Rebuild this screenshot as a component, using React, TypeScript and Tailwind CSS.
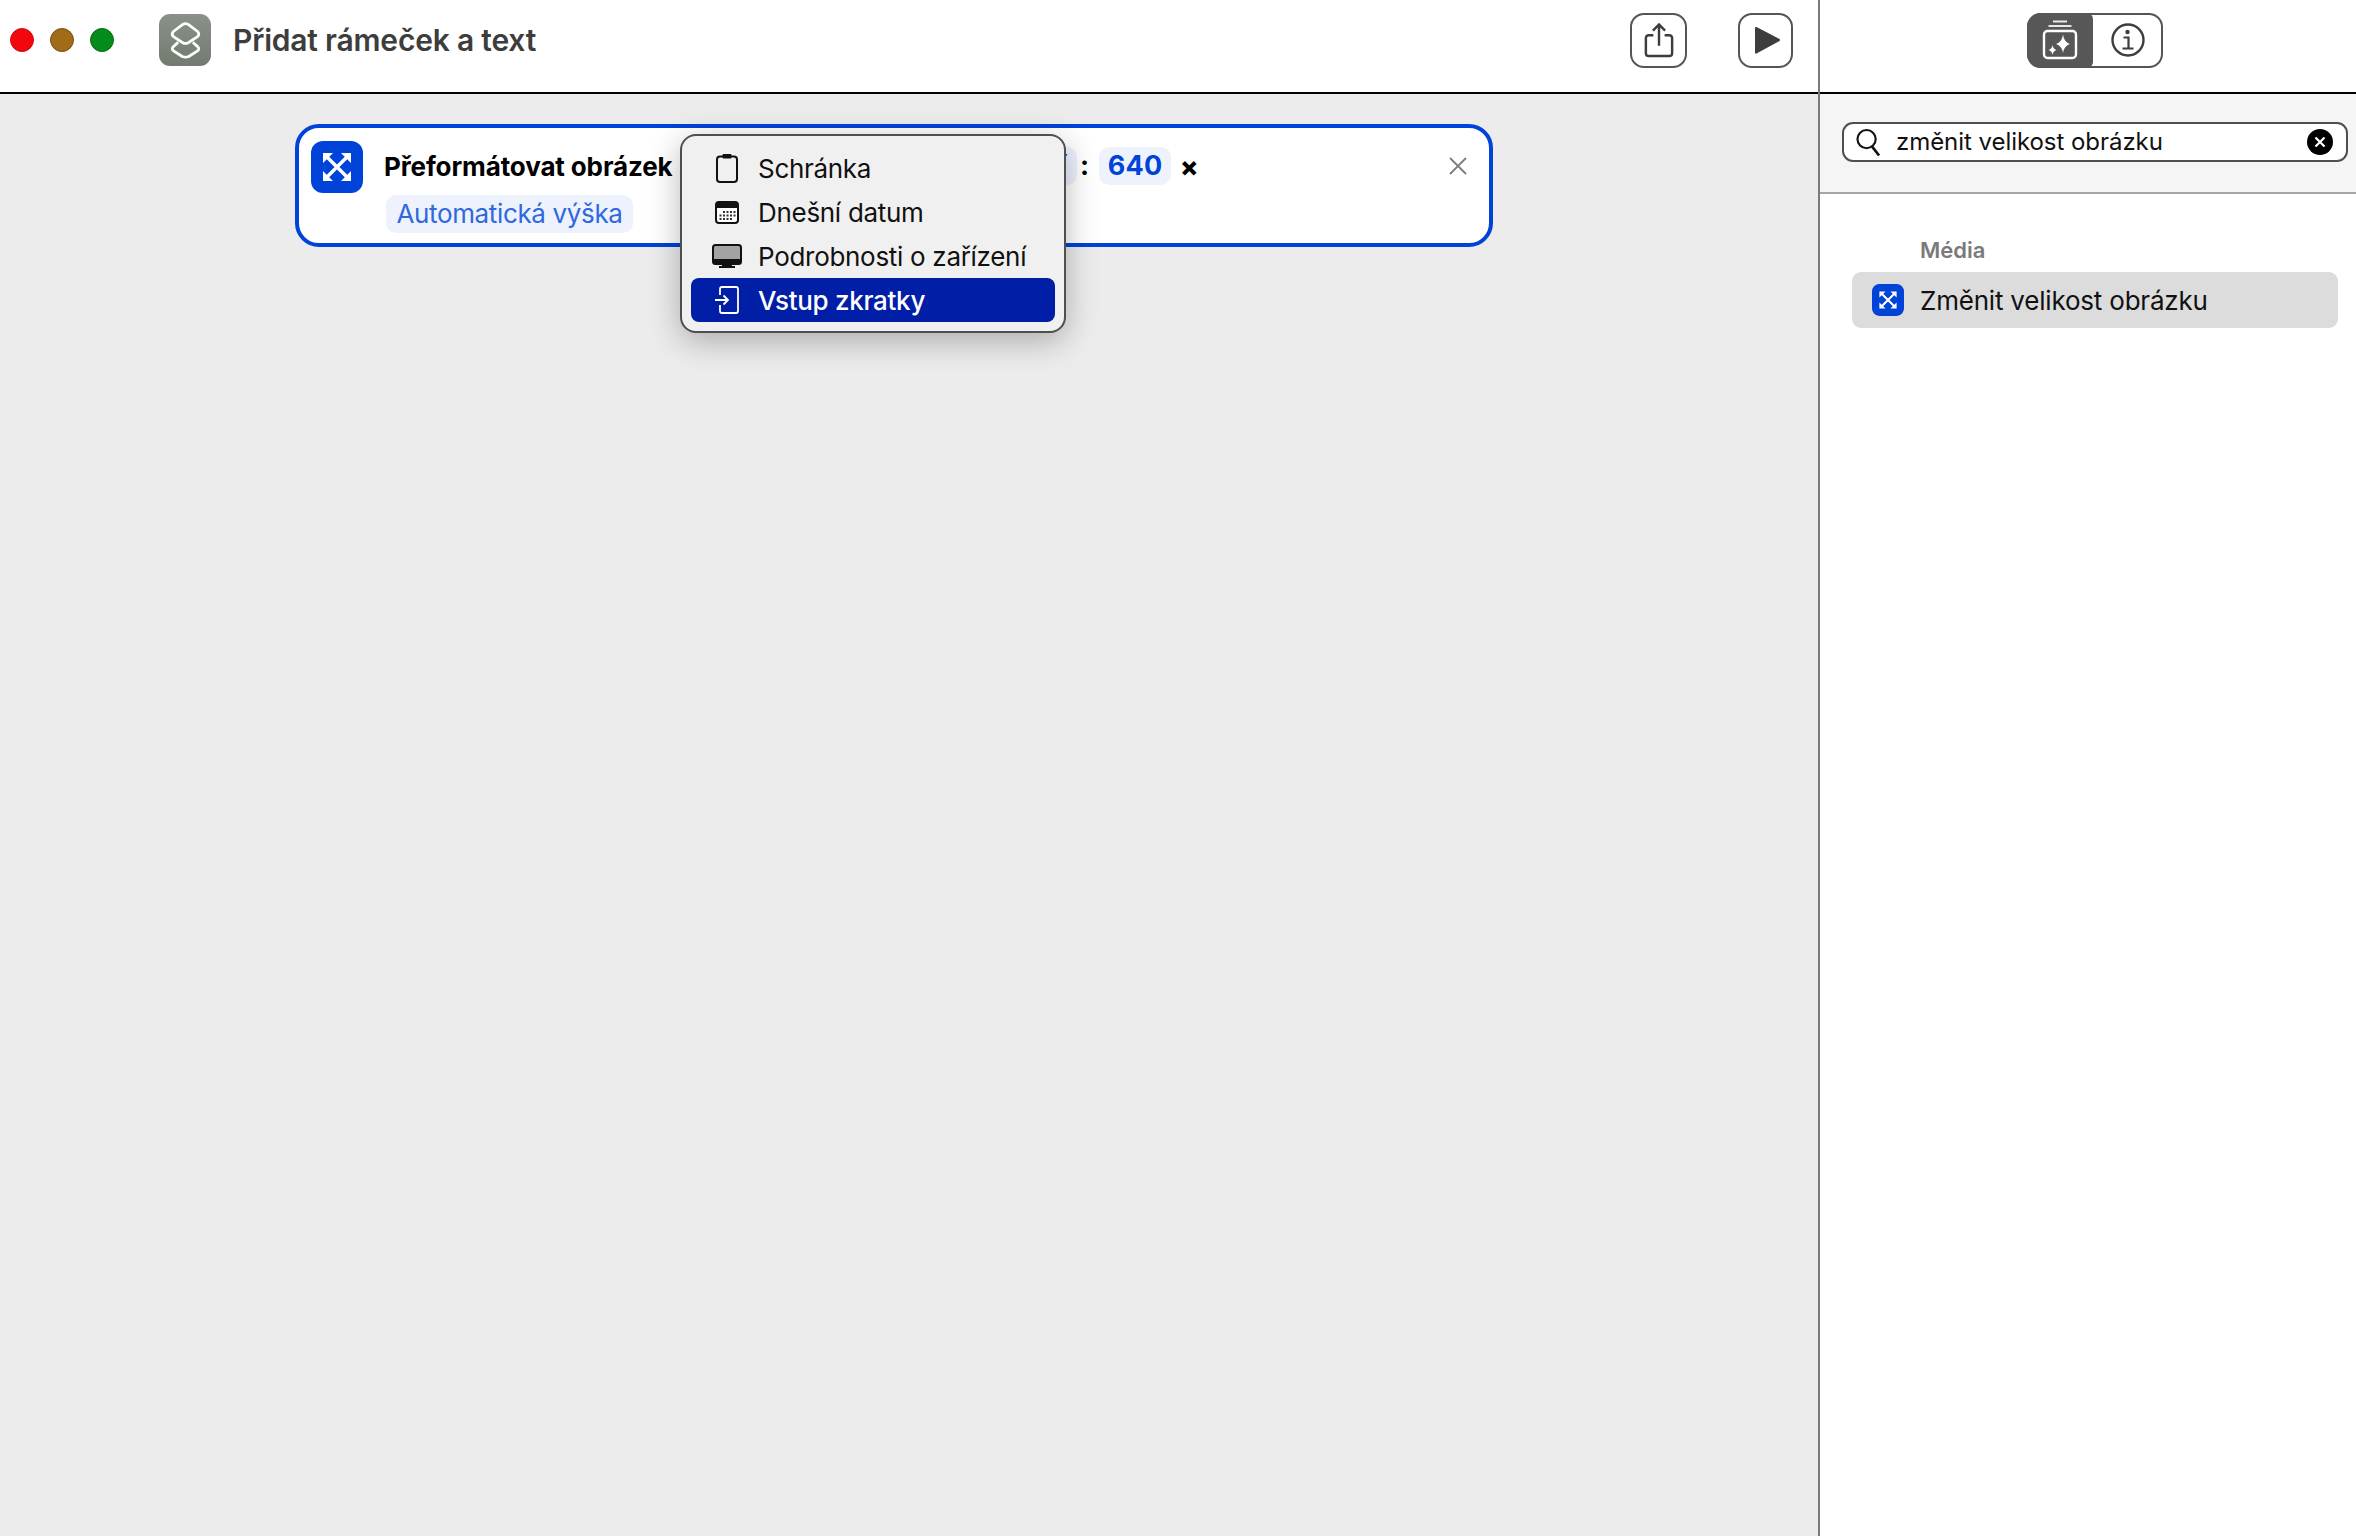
import React from 'react';

function ResizeIcon({ className }: { className?: string }) {
  return (
    <svg viewBox="0 0 52 52" className={className}>
      <rect width="52" height="52" rx="12" fill="#0043d9" />
      <path d="M15 15 L37 37 M37 15 L15 37" stroke="#fff" strokeWidth="3.4" />
      <path d="M12 12 h10 l-10 10 z M40 12 h-10 l10 10 z M12 40 h10 l-10 -10 z M40 40 h-10 l10 -10 z" fill="#fff" />
    </svg>
  );
}

function ShortcutsLogo() {
  return (
    <div className="flex h-[52px] w-[52px] items-center justify-center rounded-[11px] bg-gradient-to-b from-[#8a918a] to-[#727b70]">
      <svg viewBox="0 0 36 40" className="h-[38px] w-[33px]" fill="none" stroke="#fff" strokeWidth="3" strokeLinejoin="round">
        <path d="M10 22.5 L4.5 27.5 Q2.5 29.5 4.5 31.5 L14.5 38 Q18 39.5 21.5 38 L31.5 31.5 Q33.5 29.5 31.5 27.5 L26 22.5" />
        <path d="M15 3 Q18 1.5 21 3 L31.5 11 Q33.5 13.5 31.5 16 L21 23 Q18 24.5 15 23 L4.5 16 Q2.5 13.5 4.5 11 Z" />
      </svg>
    </div>
  );
}

function ShareIcon() {
  return (
    <svg viewBox="0 0 32 38" className="h-[38px] w-[30px]" fill="none" stroke="#3d3d3d" strokeWidth="2.6">
      <path d="M10 14 H5 Q2 14 2 17 V33 Q2 36 5 36 H27 Q30 36 30 33 V17 Q30 14 27 14 H22" />
      <path d="M16 25 V3 M9.5 9 L16 2.5 L22.5 9" />
    </svg>
  );
}

function PlayIcon() {
  return (
    <svg viewBox="0 0 26 30" className="ml-[4px] h-[30px] w-[26px]">
      <path d="M1.5 2 L24.5 14 Q25.5 15 24.5 16 L1.5 28.5 Q0 29 0 27.5 V3 Q0 1.5 1.5 2 Z" fill="#3d3d3d" />
    </svg>
  );
}

function LibraryIcon() {
  return (
    <svg viewBox="0 0 36 40" className="h-[40px] w-[36px]" fill="none" stroke="#fff">
      <path d="M11 1.5 H25 M6.5 6 H29.5" strokeWidth="2" stroke="#e8e8e8" />
      <rect x="2" y="11" width="32" height="27" rx="3.5" strokeWidth="2.4" />
      <path d="M21 14.5 Q22 22 28 24 Q22 26 21 33 Q20 26 14 24 Q20 22 21 14.5 Z" fill="#fff" stroke="none" />
      <path d="M10.5 25 Q11 29 14.5 30 Q11 31 10.5 35 Q10 31 6.5 30 Q10 29 10.5 25 Z" fill="#fff" stroke="none" />
    </svg>
  );
}

function InfoIcon() {
  return (
    <svg viewBox="0 0 34 34" className="h-[34px] w-[34px]" fill="none" stroke="#3d3d3d">
      <circle cx="17" cy="17" r="15.5" strokeWidth="2.4" />
      <circle cx="16.5" cy="9" r="2.2" fill="#3d3d3d" stroke="none" />
      <path d="M12.5 14.5 H17.5 V25 M11.5 25.5 H22.5" strokeWidth="2.2" />
    </svg>
  );
}

function SearchIcon() {
  return (
    <svg viewBox="0 0 26 30" className="h-[30px] w-[25px]" fill="none" stroke="#111" strokeWidth="2.2">
      <circle cx="11" cy="12" r="9.5" />
      <path d="M17 20 L24 29" strokeWidth="2.8" />
    </svg>
  );
}

function ClipboardIcon() {
  return (
    <svg viewBox="0 0 22 30" className="h-[30px] w-[22px]" fill="none" stroke="#111" strokeWidth="2">
      <rect x="1" y="3.5" width="20" height="25.5" rx="3" />
      <path d="M7 1.5 H15 V5 H7 Z" fill="#111" strokeWidth="1" />
    </svg>
  );
}

function CalendarIcon() {
  const dots: [number, number][] = [
    [9, 11], [12.5, 11], [16, 11], [19.5, 11],
    [5.5, 14.5], [9, 14.5], [12.5, 14.5], [16, 14.5], [19.5, 14.5],
    [5.5, 18], [9, 18], [12.5, 18], [16, 18],
  ];
  return (
    <svg viewBox="0 0 24 23" className="h-[23px] w-[24px]">
      <rect x="1" y="1" width="22" height="21" rx="3" fill="#fff" stroke="#111" strokeWidth="2" />
      <path d="M1 4 Q1 1 4 1 H20 Q23 1 23 4 V7 H1 Z" fill="#111" />
      {dots.map(([x, y]) => (
        <rect key={`${x}-${y}`} x={x - 1} y={y - 1} width="2" height="2" fill="#333" />
      ))}
    </svg>
  );
}

function DisplayIcon() {
  return (
    <svg viewBox="0 0 30 24" className="h-[24px] w-[30px]">
      <path d="M10 19 H20 V22 H23 V24 H7 V22 H10 Z" fill="#111" />
      <rect x="1" y="1" width="28" height="19" rx="2.5" fill="#a3a3a3" stroke="#111" strokeWidth="2" />
      <path d="M1 15 H29 V17.5 Q29 20 26.5 20 H3.5 Q1 20 1 17.5 Z" fill="#111" />
    </svg>
  );
}

function InputIcon() {
  return (
    <svg viewBox="0 0 24 28" className="h-[28px] w-[24px]" fill="none" stroke="#fff" strokeWidth="1.8">
      <path d="M5 9 V3 Q5 1 7 1 H21 Q23 1 23 3 V25 Q23 27 21 27 H7 Q5 27 5 25 V19" />
      <path d="M0 14 H13 M8.5 9.5 L13 14 L8.5 18.5" />
    </svg>
  );
}

const menuItems = [
  { label: 'Schránka', icon: <ClipboardIcon /> },
  { label: 'Dnešní datum', icon: <CalendarIcon /> },
  { label: 'Podrobnosti o zařízení', icon: <DisplayIcon /> },
  { label: 'Vstup zkratky', icon: <InputIcon />, active: true },
];

function VariableMenu() {
  return (
    <div className="absolute left-[381px] top-[6px] h-[199px] w-[386px] rounded-[16px] border-2 border-[#4f4f4f] bg-[#f0f0f0] px-[9px] pt-[10px] shadow-[0_8px_32px_rgba(0,0,0,0.28)]">
      {menuItems.map((item) => (
        <div
          key={item.label}
          className={`flex h-[44px] items-center rounded-[8px] pl-[19px] text-[26px] tracking-[-0.3px] ${
            item.active ? 'bg-[#001ea6] font-medium text-white' : 'text-[#111]'
          }`}
        >
          <div className="flex w-[34px] justify-center">{item.icon}</div>
          <span className="ml-[14px]">{item.label}</span>
        </div>
      ))}
    </div>
  );
}

function ActionCard() {
  return (
    <div className="relative ml-[295px] flex h-[123px] w-[1198px] items-start rounded-[24px] border-4 border-[#0043d9] bg-white pl-[12px] pr-[22px] pt-[13px]">
      <ResizeIcon className="h-[52px] w-[52px] shrink-0" />
      <div className="ml-[21px] mt-[6px] flex flex-1 flex-col gap-[10px]">
        <div className="flex h-[38px] items-center">
          <span className="w-[288px] whitespace-nowrap text-[26px] font-bold tracking-[-0.12px] text-black">Přeformátovat obrázek</span>
          <div className="ml-[285px] flex h-[38px] w-[120px] items-center justify-end rounded-[10px] bg-[#edf2fd] px-[10px] text-[27px] font-semibold text-[#0043d9]">
            Výchozí
          </div>
          <span className="ml-[3px] text-[27px] font-bold text-black">:</span>
          <div className="ml-[10px] flex h-[38px] w-[72px] items-center justify-center rounded-[10px] bg-[#edf2fd] text-[27px] font-bold tracking-[0.2px] text-[#0043d9]">
            640
          </div>
          <span className="ml-[9px] text-[27px] font-extrabold leading-none text-black">×</span>
          <svg viewBox="0 0 18 18" className="ml-auto h-[18px] w-[18px]" stroke="#7d7d7d" strokeWidth="1.8">
            <path d="M1 1 L17 17 M17 1 L1 17" />
          </svg>
        </div>
        <div className="ml-[2px] flex h-[38px] w-[247px] items-center justify-center rounded-[10px] bg-[#edf2fd] pb-[2px] text-[26px] tracking-[-0.35px] text-[#2f68df]">
          Automatická výška
        </div>
      </div>
      <VariableMenu />
    </div>
  );
}

export default function App() {
  return (
    <div className="flex h-[1536px] w-[2356px] overflow-hidden bg-white [font-family:Inter,'Liberation_Sans',sans-serif]">
      {/* editor */}
      <div className="flex w-[1820px] shrink-0 flex-col border-r-2 border-[#7a7a7a]">
        <div className="flex h-[94px] shrink-0 items-center border-b-2 border-black pb-[12px] pl-[10px] pr-[25px]">
          <div className="flex gap-[16px]">
            <div className="h-[24px] w-[24px] rounded-full border border-[#d00a12] bg-[#f2070f]" />
            <div className="h-[24px] w-[24px] rounded-full border border-[#7a5010] bg-[#a06c18]" />
            <div className="h-[24px] w-[24px] rounded-full border border-[#056e15] bg-[#058a1c]" />
          </div>
          <div className="ml-[45px]">
            <ShortcutsLogo />
          </div>
          <span className="ml-[22px] flex-1 text-[30px] font-semibold tracking-[-0.2px] text-[#3d3d3d]">Přidat rámeček a text</span>
          <div className="flex h-[55px] w-[57px] items-center justify-center rounded-[14px] border-2 border-[#555]">
            <ShareIcon />
          </div>
          <div className="ml-[51px] flex h-[55px] w-[55px] items-center justify-center rounded-[14px] border-2 border-[#555]">
            <PlayIcon />
          </div>
        </div>
        <div className="flex-1 bg-[#ececec] pt-[30px]">
          <ActionCard />
        </div>
      </div>

      {/* sidebar */}
      <div className="flex flex-1 flex-col">
        <div className="flex h-[94px] shrink-0 items-center border-b-2 border-black pb-[12px] pl-[207px]">
          <div className="flex h-[55px] w-[136px] rounded-[14px] border-2 border-[#555]">
            <div className="-m-[2px] flex h-[55px] w-[66px] shrink-0 items-center justify-center rounded-l-[14px] rounded-r-[6px] bg-[#575757]">
              <LibraryIcon />
            </div>
            <div className="flex flex-1 items-center justify-center pl-[4px]">
              <InfoIcon />
            </div>
          </div>
        </div>
        <div className="h-[100px] shrink-0 border-b-2 border-[#a5a5a5] bg-[#f5f5f5] pl-[22px] pt-[28px]">
          <div className="flex h-[40px] w-[506px] items-center rounded-[11px] border-2 border-[#4f4f4f] bg-white pl-[12px] pr-[13px]">
            <SearchIcon />
            <span className="ml-[15px] flex-1 text-[24px] leading-[30px] tracking-[-0.05px] text-[#111]">změnit velikost obrázku</span>
            <div className="flex h-[26px] w-[26px] items-center justify-center rounded-full bg-black">
              <svg viewBox="0 0 12 12" className="h-[12px] w-[12px]" stroke="#fff" strokeWidth="2.2">
                <path d="M1.5 1.5 L10.5 10.5 M10.5 1.5 L1.5 10.5" />
              </svg>
            </div>
          </div>
        </div>
        <div className="pl-[32px] pt-[43px]">
          <div className="pl-[68px] text-[22px] font-semibold leading-[26px] text-[#7a7a7a]">Média</div>
          <div className="mt-[9px] flex h-[56px] w-[486px] items-center rounded-[9px] bg-[#dcdcdc] pl-[20px]">
            <ResizeIcon className="h-[32px] w-[32px]" />
            <span className="ml-[16px] text-[26px] tracking-[-0.2px] text-[#111]">Změnit velikost obrázku</span>
          </div>
        </div>
      </div>
    </div>
  );
}
